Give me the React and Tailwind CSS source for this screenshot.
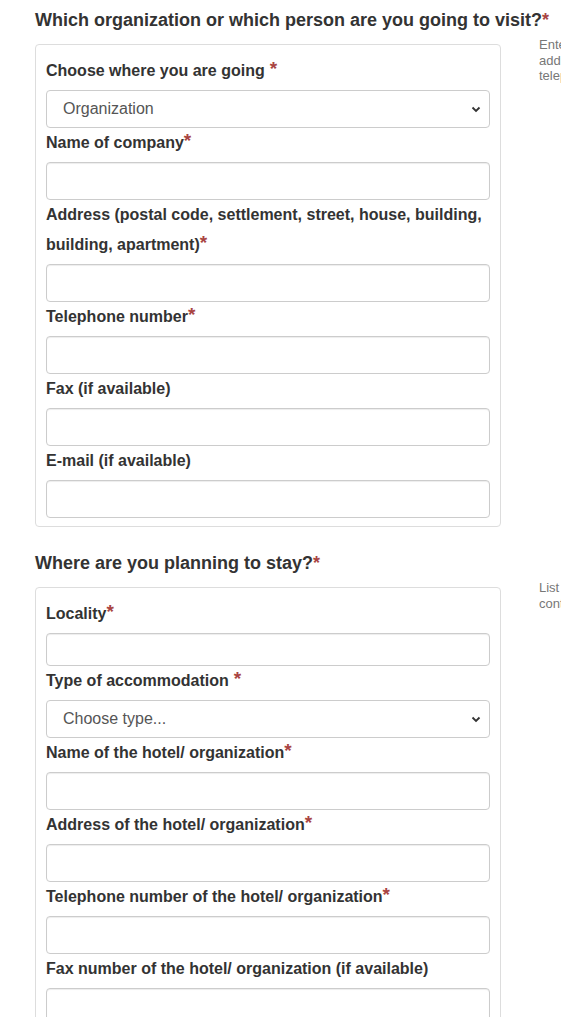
import React from "react";

const Star = ({ space, big }) => (
  <span
    className={`text-[#a94442] ${space ? "ml-[5px]" : ""} ${big ? "text-[19px] leading-[0] relative top-[-1px]" : ""}`}
  >
    *
  </span>
);

const Label = ({ children, req, space }) => (
  <div className="text-[16px] font-bold leading-[30px] text-[#333] mb-[4px]">
    {children}
    {req && <Star space={space} big />}
  </div>
);

const Input = ({ h = "h-[38px]" }) => (
  <div className={`${h} w-full rounded-[4px] border border-[#ccc] bg-white shadow-[inset_0_1px_1px_rgba(0,0,0,0.075)]`} />
);

const Select = ({ value }) => (
  <div className="relative h-[38px] w-full rounded-[4px] border border-[#ccc] bg-white flex items-center pl-[16px] text-[16px] text-[#555]">
    {value}
    <svg className="absolute right-[8px] top-[15px]" width="10" height="7" viewBox="0 0 10 7">
      <path d="M1.5 1.5 L5 5 L8.5 1.5" fill="none" stroke="#333" strokeWidth="1.8" />
    </svg>
  </div>
);

const Heading = ({ children }) => (
  <div className="text-[18px] font-bold leading-[22px] text-[#333] mb-[6px]">
    {children}
    <Star />
  </div>
);

const Hint = ({ lines }) => (
  <div className="w-[200px] shrink-0 text-[13px] leading-[15.5px] text-[#777] whitespace-nowrap">
    {lines.map((l, i) => (
      <div key={i}>{l}</div>
    ))}
  </div>
);

const Box = ({ children }) => (
  <div className="mt-[7px] w-[466px] shrink-0 rounded-[4px] border border-[#ddd] px-[10px] pt-[11px] pb-[8px]">
    {children}
  </div>
);

export default function App() {
  return (
    <div
      className="w-[561px] h-[1017px] overflow-hidden bg-white pl-[35px] pt-[9px]"
      style={{ fontFamily: '"Liberation Sans", Arial, sans-serif' }}
    >
      <div className="w-[700px]">
        <Heading>Which organization or which person are you going to visit?</Heading>
        <div className="flex gap-[38px]">
          <Box>
            <Label req space>Choose where you are going</Label>
            <Select value="Organization" />
            <Label req>Name of company</Label>
            <Input />
            <Label req>
              Address (postal code, settlement, street, house, building, building, apartment)
            </Label>
            <Input />
            <Label req>Telephone number</Label>
            <Input />
            <Label>Fax (if available)</Label>
            <Input />
            <Label>E-mail (if available)</Label>
            <Input />
          </Box>
          <Hint
            lines={[
              "Enter the name of the organization,",
              "address (postal code, settlement),",
              "telephone number",
            ]}
          />
        </div>

        <div className="mt-[25px]">
          <Heading>Where are you planning to stay?</Heading>
          <div className="flex gap-[38px]">
            <Box>
              <Label req>Locality</Label>
              <Input h="h-[33px]" />
              <Label req space>Type of accommodation</Label>
              <Select value="Choose type..." />
              <Label req>Name of the hotel/ organization</Label>
              <Input />
              <Label req>Address of the hotel/ organization</Label>
              <Input />
              <Label req>Telephone number of the hotel/ organization</Label>
              <Input />
              <Label>Fax number of the hotel/ organization (if available)</Label>
              <Input />
            </Box>
            <Hint
              lines={[
                "List the place where you will stay,",
                "contact details of the hotel",
              ]}
            />
          </div>
        </div>
      </div>
    </div>
  );
}
